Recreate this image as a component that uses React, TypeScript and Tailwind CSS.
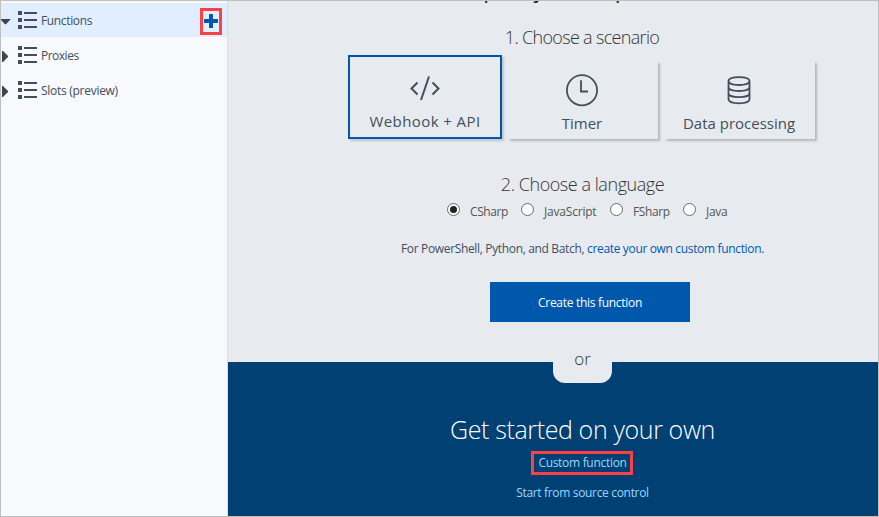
import React from "react";

function ListIcon() {
  return (
    <svg width="20" height="18" viewBox="0 0 20 18" fill="#434e5d" shapeRendering="crispEdges" className="shrink-0">
      {[0, 7, 14].map((y) => (
        <g key={y}>
          <rect x="0" y={y} width="4" height="4" />
          <rect x="6" y={y + 1} width="13" height="2" />
        </g>
      ))}
    </svg>
  );
}

function Arrow({ open }: { open?: boolean }) {
  return (
    <svg width="11" height="14" viewBox="0 0 11 14" fill="#3c4655" className="shrink-0">
      <path d={open ? "M0 6H9.8L5 11.2H4L0 7Z" : "M1 3L2 3L7 8V9L2 14H1Z"} />
    </svg>
  );
}

function TreeRow({ label, text, open, children }: { label: string; text: string; open?: boolean; children?: React.ReactNode }) {
  return (
    <div className="flex h-[35px] w-[226px] items-start">
      <div className={`flex h-[34px] w-full items-center ${open ? "bg-[#e0eeff]" : ""}`}>
        <Arrow open={open} />
        <div className="ml-[6px] flex">
          <ListIcon />
        </div>
        <span className={`ml-[3px] pt-[2px] whitespace-nowrap text-[12px] leading-[18px] text-[#434e5d] ${text}`}>{label}</span>
        {children}
      </div>
    </div>
  );
}

function Radio({ label, checked, box, text }: { label: string; checked?: boolean; box: string; text: string }) {
  return (
    <label className={`flex items-start ${box}`}>
      <span className="flex size-[13px] shrink-0 items-center justify-center rounded-full border border-[#6b6b6b] bg-white">
        {checked && <span className="size-[7px] rounded-full bg-[#222]" />}
      </span>
      <span className={`ml-[10px] whitespace-nowrap text-[12px] leading-[18px] text-[#555] ${text}`}>{label}</span>
    </label>
  );
}

export default function App() {
  return (
    <div className="flex h-[517px] w-[879px] overflow-hidden border border-[#c0c0c0] bg-[#e7ebf0] font-['Open_Sans','Noto_Sans',sans-serif]">
      <aside className="flex w-[227px] shrink-0 flex-col border-r border-[#d7dee6] bg-[#f8f9fc] pt-[2px]">
        <TreeRow label="Functions" text="tracking-[-0.35px]" open>
          <span className="mt-[3px] mr-[5px] ml-auto flex h-[27px] w-[22px] items-center justify-center border-3 border-[#fb4145] pb-[2px]">
            <svg width="14" height="14" viewBox="0 0 14 14" fill="#0058ad">
              <path d="M5.5 0H8.5Q9 0 9 .5V5H13.5Q14 5 14 5.5V8.5Q14 9 13.5 9H9V13.5Q9 14 8.5 14H5.5Q5 14 5 13.5V9H.5Q0 9 0 8.5V5.5Q0 5 .5 5H5V.5Q5 0 5.5 0Z" />
            </svg>
          </span>
        </TreeRow>
        <TreeRow label="Proxies" text="tracking-[-0.5px]" />
        <TreeRow label="Slots (preview)" text="tracking-[-0.28px]" />
      </aside>

      <main className="flex min-w-0 flex-1 flex-col">
        <section className="flex h-[361px] flex-col items-center pl-[59px]">
          <h1 className="-mt-[31px] mr-[12px] h-[36px] whitespace-nowrap text-[23px] leading-[36px] tracking-[-0.75px] text-[#222]">
            Get started quickly with a premade function
          </h1>
          <h2 className="mt-[19px] mr-[1px] h-[24px] whitespace-nowrap text-[18px] leading-[24px] font-light tracking-[-0.68px] text-[#333]">
            1. Choose a scenario
          </h2>
          <div className="mt-[6px] mr-[2px] flex h-[86px] items-start">
            <div className="flex h-[84px] w-[154px] flex-col items-center border-2 border-[#0058ad] pt-[18px] text-[#434e5d] shadow-[2px_2px_2px_rgba(0,0,0,0.16)]">
              <svg width="32" height="26" viewBox="0 0 32 26" fill="none" stroke="#434e5d" strokeWidth="2">
                <path d="M8.5 7.5L2.5 13.5L8.5 19.5M23.5 7.5L29.5 13.5L23.5 19.5M20 1.5L12 25" />
              </svg>
              <span className="mt-[8px] whitespace-nowrap text-[15px] leading-[24px] tracking-[0.42px]">Webhook + API</span>
            </div>
            <div className="mt-[6px] ml-[6px] flex h-[78px] w-[150px] flex-col items-center pt-[12px] pr-[2px] text-[#434e5d] shadow-[2px_2px_2px_rgba(0,0,0,0.22)]">
              <svg width="34" height="34" viewBox="0 0 34 34" fill="none" stroke="#434e5d" strokeWidth="1.8">
                <circle cx="17" cy="17.2" r="15.1" />
                <path d="M16 7.3V18.5H23" />
              </svg>
              <span className="mt-[4px] whitespace-nowrap text-[15px] leading-[24px]">Timer</span>
            </div>
            <div className="mt-[6px] ml-[7px] flex h-[78px] w-[150px] flex-col items-center pt-[14px] pr-[2px] text-[#434e5d] shadow-[2px_2px_2px_rgba(0,0,0,0.22)]">
              <svg width="24" height="30" viewBox="0 0 24 30" fill="none" stroke="#434e5d" strokeWidth="1.8">
                <path d="M22.5 6C22.5 11.3 1.5 11.3 1.5 6C1.5 .7 22.5 .7 22.5 6ZM1.5 6V24.3C1.5 29.6 22.5 29.6 22.5 24.3V6M1.5 12C1.5 17.3 22.5 17.3 22.5 12M1.5 18.2C1.5 23.5 22.5 23.5 22.5 18.2" />
              </svg>
              <span className="mt-[6px] whitespace-nowrap text-[15px] leading-[24px]">Data processing</span>
            </div>
          </div>
          <h2 className="mt-[31px] h-[24px] whitespace-nowrap text-[18px] leading-[24px] font-light tracking-[-0.45px] text-[#333]">
            2. Choose a language
          </h2>
          <div className="mt-[7px] ml-[10px] flex h-[20px] w-[281px]">
            <Radio label="CSharp" checked box="w-[74px]" text="tracking-[-0.4px]" />
            <Radio label="JavaScript" box="w-[89px]" text="tracking-[-0.2px]" />
            <Radio label="FSharp" box="w-[73px]" text="tracking-[-0.4px]" />
            <Radio label="Java" box="w-[45px]" text="tracking-[-0.3px]" />
          </div>
          <p className="mt-[17px] h-[18px] whitespace-nowrap text-[12px] leading-[18px] tracking-[-0.34px] text-[#434e5d]">
            For PowerShell, Python, and Batch, <a className="text-[#0058ad]">create your own custom function.</a>
          </p>
          <button className="mt-[24px] ml-[15px] h-[40px] w-[200px] shrink-0 bg-[#0058ad] pt-[2px] text-[12px] tracking-[-0.3px] whitespace-nowrap text-white">
            Create this function
          </button>
        </section>

        <section className="flex flex-1 flex-col items-center bg-[#004073] pl-[59px]">
          <div className="relative h-[21px] w-[59px] shrink-0 rounded-b-[12px] bg-[#e7ebf0]">
            <span className="absolute inset-x-0 -top-[15px] text-center text-[17px] leading-[24px] font-light text-[#333]">or</span>
          </div>
          <h1 className="mt-[27px] h-[38px] whitespace-nowrap text-[25px] leading-[38px] font-light tracking-[-0.38px] text-white">
            Get started on your own
          </h1>
          <a className="mt-[3px] mr-[2px] flex h-[24px] w-[102px] items-center justify-center border-3 border-[#fb4145] pl-[2px] text-[12px] tracking-[-0.3px] whitespace-nowrap text-[#99d9ff]">
            Custom function
          </a>
          <a className="mt-[9px] text-[12px] leading-[18px] tracking-[-0.33px] whitespace-nowrap text-[#99d9ff]">
            Start from source control
          </a>
        </section>
      </main>
    </div>
  );
}
